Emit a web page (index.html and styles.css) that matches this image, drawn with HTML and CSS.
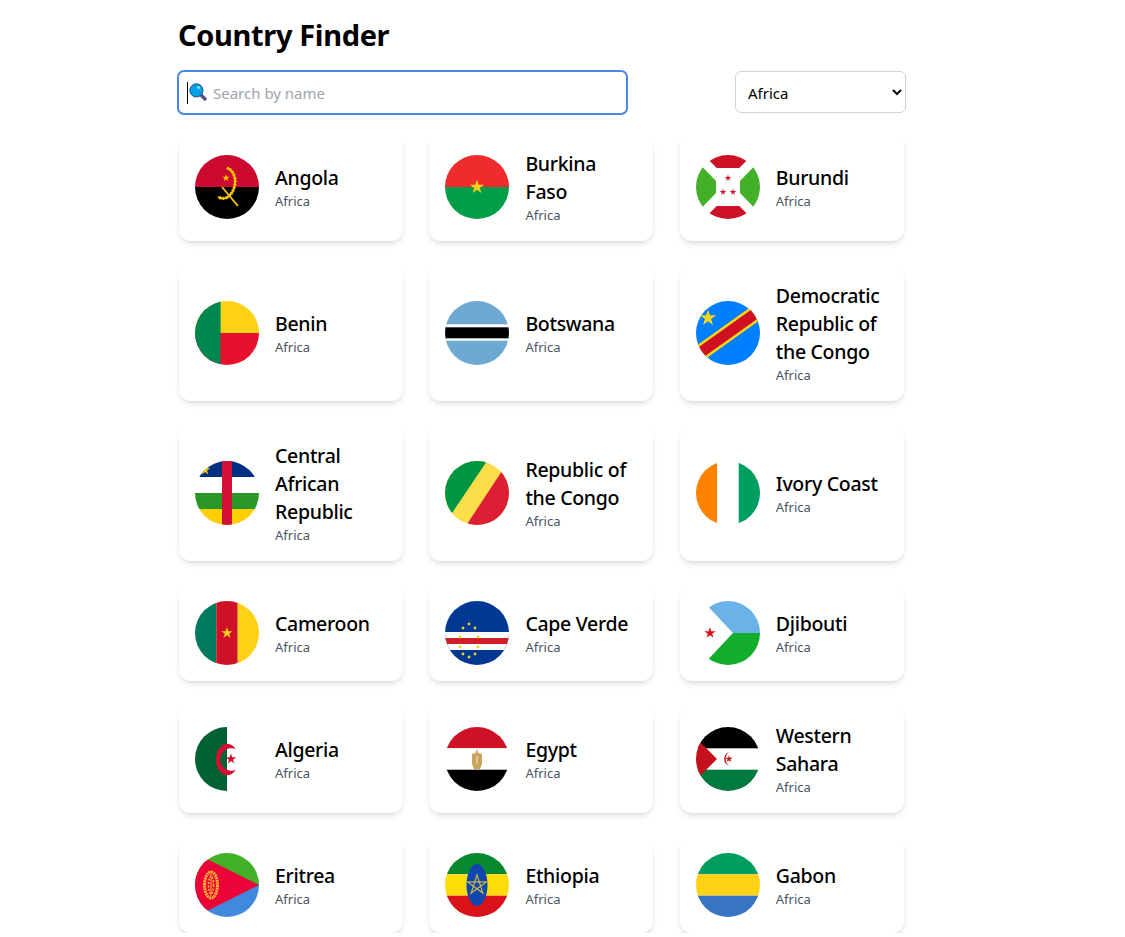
FILE: index.html
```html
<!DOCTYPE html>
<html lang="en">
<head>
  <meta charset="UTF-8">
  <title>Country Finder</title>
  <link rel="stylesheet" href="styles.css">
</head>
<body>
  <svg class="defs" width="0" height="0" aria-hidden="true">
    <defs>
      <polygon id="star" points="0,-10 2.245,-3.09 9.51,-3.09 3.63,1.18 5.88,8.09 0,3.82 -5.88,8.09 -3.63,1.18 -9.51,-3.09 -2.245,-3.09"/>
    </defs>
  </svg>

  <main class="page">
    <h1>Country Finder</h1>

    <div class="toolbar">
      <div class="search">
        <span class="caret"></span>
        <svg class="search-icon" viewBox="0 0 18 18">
          <path d="M11 11l5 5" stroke="#5c4b8c" stroke-width="3.4" stroke-linecap="round"/>
          <circle cx="7.4" cy="7.4" r="6.6" fill="#00a2e8" stroke="#2b4c7e" stroke-width="1"/>
          <circle cx="9.6" cy="4.6" r="1.4" fill="#9fe3ff"/>
        </svg>
        <input type="text" placeholder="Search by name">
      </div>
      <select class="region">
        <option>Africa</option>
        <option>Americas</option>
        <option>Asia</option>
        <option>Europe</option>
        <option>Oceania</option>
      </select>
    </div>

    <div class="grid">
      <div class="card">
        <svg class="flag" viewBox="0 0 64 64">
          <rect width="64" height="32" fill="#cc092f"/>
          <rect y="32" width="64" height="32" fill="#000"/>
          <path d="M32 13c6 2 9 9 8 16-1 7-5 12-9 14-3 1-6 0-8-1" fill="none" stroke="#ffcb00" stroke-width="2"/>
          <path d="M32 13c6 2 9 9 8 16-1 7-5 12-9 14-3 1-6 0-8-1" fill="none" stroke="#ffcb00" stroke-width="3.4" stroke-dasharray="1.2 2"/>
          <path d="M27 32l16 19" stroke="#ffcb00" stroke-width="1.8"/>
          <use href="#star" transform="translate(31 23) scale(.38)" fill="#ffcb00"/>
        </svg>
        <div class="info"><div class="name">Angola</div><div class="continent">Africa</div></div>
      </div>

      <div class="card">
        <svg class="flag" viewBox="0 0 64 64">
          <rect width="64" height="32" fill="#ef2b2d"/>
          <rect y="32" width="64" height="32" fill="#009e49"/>
          <use href="#star" transform="translate(32 32) scale(.75)" fill="#fcd116"/>
        </svg>
        <div class="info"><div class="name">Burkina Faso</div><div class="continent">Africa</div></div>
      </div>

      <div class="card">
        <svg class="flag" viewBox="0 0 64 64">
          <rect width="64" height="64" fill="#fff"/>
          <polygon points="20.7,13 43.3,13 64,-8 0,-8" fill="#ce1126"/>
          <polygon points="20.7,51 43.3,51 64,72 0,72" fill="#ce1126"/>
          <polygon points="-8,-3 20,26 20,38 -8,67" fill="#43b02a"/>
          <polygon points="72,-3 44,26 44,38 72,67" fill="#43b02a"/>
          <ellipse cx="32" cy="32" rx="12" ry="19" fill="#fff"/>
          <use href="#star" transform="translate(32 23) scale(.35)" fill="#ce1126"/>
          <use href="#star" transform="translate(27 37) scale(.35)" fill="#ce1126"/>
          <use href="#star" transform="translate(37 37) scale(.35)" fill="#ce1126"/>
        </svg>
        <div class="info"><div class="name">Burundi</div><div class="continent">Africa</div></div>
      </div>

      <div class="card">
        <svg class="flag" viewBox="0 0 64 64">
          <rect width="64" height="32" fill="#fcd116"/>
          <rect y="32" width="64" height="32" fill="#e8112d"/>
          <rect width="25.6" height="64" fill="#008751"/>
        </svg>
        <div class="info"><div class="name">Benin</div><div class="continent">Africa</div></div>
      </div>

      <div class="card">
        <svg class="flag" viewBox="0 0 64 64">
          <rect width="64" height="64" fill="#6da9d2"/>
          <rect y="23.3" width="64" height="16.4" fill="#fff"/>
          <rect y="26.3" width="64" height="11" fill="#000"/>
        </svg>
        <div class="info"><div class="name">Botswana</div><div class="continent">Africa</div></div>
      </div>

      <div class="card">
        <svg class="flag" viewBox="0 0 64 64">
          <rect width="64" height="64" fill="#007fff"/>
          <path d="M-10 62L74 2" stroke="#f7d618" stroke-width="16"/>
          <path d="M-10 62L74 2" stroke="#ce1021" stroke-width="11"/>
          <use href="#star" transform="translate(12 17) scale(.85)" fill="#f7d618"/>
        </svg>
        <div class="info"><div class="name">Democratic Republic of the Congo</div><div class="continent">Africa</div></div>
      </div>

      <div class="card">
        <svg class="flag" viewBox="0 0 64 64">
          <rect width="64" height="16" fill="#003082"/>
          <rect y="16" width="64" height="16" fill="#fff"/>
          <rect y="32" width="64" height="16" fill="#289728"/>
          <rect y="48" width="64" height="16" fill="#ffce00"/>
          <rect x="27" width="10" height="64" fill="#d21034"/>
          <use href="#star" transform="translate(10 9) scale(.55)" fill="#ffce00"/>
        </svg>
        <div class="info"><div class="name">Central African Republic</div><div class="continent">Africa</div></div>
      </div>

      <div class="card">
        <svg class="flag" viewBox="0 0 64 64">
          <rect width="64" height="64" fill="#fbde4a"/>
          <polygon points="-16,0 42,0 -1,64 -16,64" fill="#009543"/>
          <polygon points="63.5,0 80,0 80,64 21.5,64" fill="#dc1e35"/>
        </svg>
        <div class="info"><div class="name">Republic of the Congo</div><div class="continent">Africa</div></div>
      </div>

      <div class="card">
        <svg class="flag" viewBox="0 0 64 64">
          <rect width="21.3" height="64" fill="#ff8200"/>
          <rect x="21.3" width="21.4" height="64" fill="#fff"/>
          <rect x="42.7" width="21.3" height="64" fill="#009e60"/>
        </svg>
        <div class="info"><div class="name">Ivory Coast</div><div class="continent">Africa</div></div>
      </div>

      <div class="card">
        <svg class="flag" viewBox="0 0 64 64">
          <rect width="21.3" height="64" fill="#007a5e"/>
          <rect x="21.3" width="21.4" height="64" fill="#ce1126"/>
          <rect x="42.7" width="21.3" height="64" fill="#fcd116"/>
          <use href="#star" transform="translate(32 32) scale(.6)" fill="#fcd116"/>
        </svg>
        <div class="info"><div class="name">Cameroon</div><div class="continent">Africa</div></div>
      </div>

      <div class="card">
        <svg class="flag" viewBox="0 0 64 64">
          <rect width="64" height="64" fill="#003893"/>
          <rect y="31" width="64" height="18" fill="#fff"/>
          <rect y="37" width="64" height="6" fill="#cf2027"/>
          <g fill="#f7d116">
            <circle cx="24" cy="23" r="1.4"/><circle cx="18" cy="27" r="1.4"/><circle cx="30" cy="27" r="1.4"/>
            <circle cx="15" cy="36" r="1.4"/><circle cx="33" cy="36" r="1.4"/><circle cx="15" cy="46" r="1.4"/>
            <circle cx="33" cy="46" r="1.4"/><circle cx="18" cy="53" r="1.4"/><circle cx="30" cy="53" r="1.4"/>
            <circle cx="24" cy="56" r="1.4"/>
          </g>
        </svg>
        <div class="info"><div class="name">Cape Verde</div><div class="continent">Africa</div></div>
      </div>

      <div class="card">
        <svg class="flag" viewBox="0 0 64 64">
          <rect width="64" height="64" fill="#fff"/>
          <polygon points="5,-2 70,-2 70,32 37,32" fill="#6ab2e7"/>
          <polygon points="5,66 70,66 70,32 37,32" fill="#12ad2b"/>
          <use href="#star" transform="translate(14 32) scale(.6)" fill="#d7141a"/>
        </svg>
        <div class="info"><div class="name">Djibouti</div><div class="continent">Africa</div></div>
      </div>

      <div class="card">
        <svg class="flag" viewBox="0 0 64 64">
          <rect width="64" height="64" fill="#fff"/>
          <rect width="32" height="64" fill="#006233"/>
          <path d="M40.7 22A11.3 15.8 0 1 0 40.7 43A11.3 11.3 0 1 1 40.7 22z" fill="#d21034"/>
          <use href="#star" transform="translate(36 32) scale(.55)" fill="#d21034"/>
        </svg>
        <div class="info"><div class="name">Algeria</div><div class="continent">Africa</div></div>
      </div>

      <div class="card">
        <svg class="flag" viewBox="0 0 64 64">
          <rect width="64" height="21.3" fill="#ce1126"/>
          <rect y="21.3" width="64" height="21.4" fill="#fff"/>
          <rect y="42.7" width="64" height="21.3" fill="#000"/>
          <path d="M32 22l1.5 4 3.5 1v10l-2 5h-6l-2-5V27l3.5-1z" fill="#c9a65c"/>
          <path d="M32 29v8" stroke="#f3e6c4" stroke-width="1"/>
        </svg>
        <div class="info"><div class="name">Egypt</div><div class="continent">Africa</div></div>
      </div>

      <div class="card">
        <svg class="flag" viewBox="0 0 64 64">
          <rect width="64" height="64" fill="#fff"/>
          <rect width="64" height="21.3" fill="#000"/>
          <rect y="42.7" width="64" height="21.3" fill="#007a3d"/>
          <polygon points="21,32 -11,0 -11,64" fill="#c4111b"/>
          <path d="M33 25a7.5 7.5 0 0 0 0 14a9 9 0 0 1 0-14z" fill="#c4111b"/>
          <use href="#star" transform="translate(33 32) scale(.38)" fill="#c4111b"/>
        </svg>
        <div class="info"><div class="name">Western Sahara</div><div class="continent">Africa</div></div>
      </div>

      <div class="card">
        <svg class="flag" viewBox="0 0 64 64">
          <rect width="64" height="32" fill="#43b02a"/>
          <rect y="32" width="64" height="32" fill="#4189dd"/>
          <polygon points="64,32 -16,-8 -16,72" fill="#ea0437"/>
          <ellipse cx="16" cy="32" rx="6.5" ry="13" fill="none" stroke="#ffb930" stroke-width="3" stroke-dasharray="2 .6"/>
          <ellipse cx="16" cy="32" rx="2.5" ry="9" fill="none" stroke="#ffb930" stroke-width="1.6" stroke-dasharray="2 1.4"/>
          <path d="M16 21v22" stroke="#ffb930" stroke-width="1"/>
        </svg>
        <div class="info"><div class="name">Eritrea</div><div class="continent">Africa</div></div>
      </div>

      <div class="card">
        <svg class="flag" viewBox="0 0 64 64">
          <rect width="64" height="21.3" fill="#078930"/>
          <rect y="21.3" width="64" height="21.4" fill="#fcdd09"/>
          <rect y="42.7" width="64" height="21.3" fill="#da121a"/>
          <ellipse cx="32" cy="32" rx="10.5" ry="21" fill="#0f47af"/>
          <polygon points="32,22 37.9,40.1 22.5,28.9 41.5,28.9 26.1,40.1" fill="none" stroke="#c9b54a" stroke-width="1.2"/>
        </svg>
        <div class="info"><div class="name">Ethiopia</div><div class="continent">Africa</div></div>
      </div>

      <div class="card">
        <svg class="flag" viewBox="0 0 64 64">
          <rect width="64" height="21.3" fill="#009e60"/>
          <rect y="21.3" width="64" height="21.4" fill="#fcd116"/>
          <rect y="42.7" width="64" height="21.3" fill="#3a75c4"/>
        </svg>
        <div class="info"><div class="name">Gabon</div><div class="continent">Africa</div></div>
      </div>
    </div>
  </main>
</body>
</html>
```

FILE: styles.css
```css
* {
  box-sizing: border-box;
}

body {
  margin: 0;
  background: #fff;
  font-family: "Noto Sans", "Open Sans", sans-serif;
  color: #000;
}

.defs {
  position: absolute;
}

.page {
  width: 728px;
  margin-left: 178px;
  padding-top: 17px;
}

h1 {
  margin: 0 0 16.5px;
  font-size: 29px;
  line-height: 36px;
  font-weight: 700;
  letter-spacing: -0.35px;
}

.toolbar {
  display: flex;
  justify-content: space-between;
  align-items: center;
  margin-bottom: 18.5px;
}

.search {
  position: relative;
  width: 451px;
  margin-left: -1.5px;
}

.search input {
  display: block;
  width: 100%;
  height: 45px;
  padding: 2px 12px 0 34.5px;
  border: 2.5px solid #4a86e8;
  border-radius: 7px;
  outline: none;
  font: inherit;
  font-size: 15px;
  color: #000;
}

.search input::placeholder {
  color: #a0a3b1;
}

.caret {
  position: absolute;
  left: 10.5px;
  top: 12px;
  width: 1px;
  height: 22px;
  background: #000;
}

.search-icon {
  position: absolute;
  left: 12.5px;
  top: 13.5px;
  width: 18px;
  height: 18px;
}

.region {
  width: 171px;
  height: 42px;
  padding: 2px 8px 0;
  border: 1px solid #d1d1dc;
  border-radius: 6px;
  background: #fff;
  font: inherit;
  font-size: 15px;
  color: #000;
}

.grid {
  display: grid;
  grid-template-columns: repeat(3, 224px);
  gap: 24px 26.4px;
  margin-left: 1px;
}

.card {
  display: flex;
  align-items: center;
  gap: 16px;
  padding: 16px;
  border-radius: 12px;
  background: #fff;
  box-shadow: 0 4px 6px -1px rgba(0, 0, 0, 0.1), 0 2px 4px -2px rgba(0, 0, 0, 0.1);
}

.flag {
  flex: none;
  width: 64px;
  height: 64px;
  border-radius: 50%;
}

.name {
  margin: 1px 0 -1px;
  font-size: 19.5px;
  line-height: 28px;
  font-weight: 500;
  letter-spacing: -0.3px;
}

.continent {
  font-size: 13px;
  line-height: 20px;
  color: #4b5563;
}
```
